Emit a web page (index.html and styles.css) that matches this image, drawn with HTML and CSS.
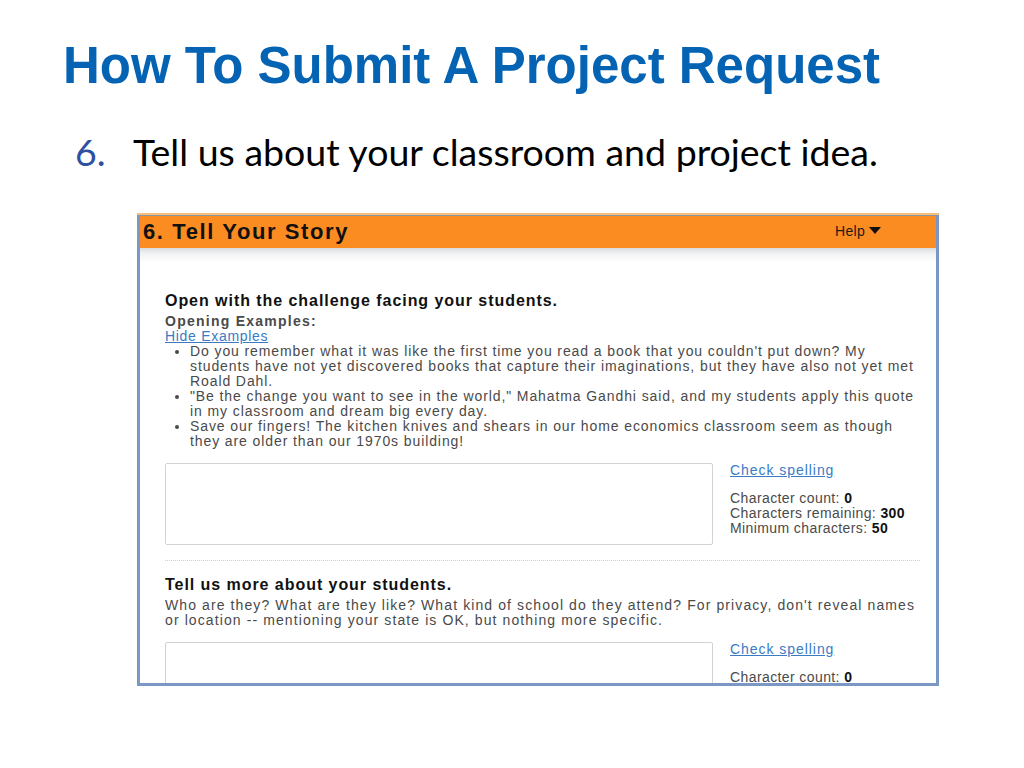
FILE: index.html
```html
<!DOCTYPE html>
<html lang="en">
<head>
<meta charset="utf-8">
<title>How To Submit A Project Request</title>
<link rel="stylesheet" href="styles.css">
</head>
<body>
<main class="slide">
  <h1 class="title">How To Submit A Project Request</h1>
  <p class="step"><span class="step-num">6.</span><span class="step-text">Tell us about your classroom and project idea.</span></p>

  <div class="shot">
    <div class="shot-head">
      <span class="shot-title">6. Tell Your Story</span>
      <span class="help">Help <svg class="caret" width="12" height="7" viewBox="0 0 12 7"><path d="M0 0H12L6 7Z" fill="#111"/></svg></span>
    </div>
    <div class="shot-body">
      <section class="q">
        <h2 class="q-title">Open with the challenge facing your students.</h2>
        <div class="q-sub">Opening Examples:</div>
        <a class="link">Hide Examples</a>
        <ul class="examples">
          <li>Do you remember what it was like the first time you read a book that you couldn't put down? My students have not yet discovered books that capture their imaginations, but they have also not yet met Roald Dahl.</li>
          <li>"Be the change you want to see in the world," Mahatma Gandhi said, and my students apply this quote in my classroom and dream big every day.</li>
          <li>Save our fingers! The kitchen knives and shears in our home economics classroom seem as though they are older than our 1970s building!</li>
        </ul>
        <div class="answer">
          <div class="box"></div>
          <div class="meta">
            <a class="link spell">Check spelling</a>
            <div class="counts">
              <div>Character count: <b>0</b></div>
              <div>Characters remaining: <b>300</b></div>
              <div>Minimum characters: <b>50</b></div>
            </div>
          </div>
        </div>
      </section>
      <hr class="sep">
      <section class="q">
        <h2 class="q-title">Tell us more about your students.</h2>
        <p class="q-desc">Who are they? What are they like? What kind of school do they attend? For privacy, don't reveal names or location -- mentioning your state is OK, but nothing more specific.</p>
        <div class="answer">
          <div class="box"></div>
          <div class="meta">
            <a class="link spell">Check spelling</a>
            <div class="counts">
              <div>Character count: <b>0</b></div>
            </div>
          </div>
        </div>
      </section>
    </div>
  </div>
</main>
</body>
</html>
```

FILE: styles.css
```css
* { box-sizing: border-box; }
html, body { margin: 0; padding: 0; background: #fff; }
body { width: 1024px; height: 768px; overflow: hidden; }

.slide {
  padding: 36px 0 0 63px;
}

.title {
  margin: 0;
  font-family: "Liberation Sans", Arial, sans-serif;
  font-weight: bold;
  font-size: 51px;
  line-height: 60px;
  color: #0563b3;
}

.step {
  margin: 34px 0 0 12px;
  display: flex;
  font-family: Lato, "Open Sans", sans-serif;
  font-size: 37.5px;
  line-height: 44px;
  color: #000;
}
.step-num { width: 58px; color: #2f4f9f; }

.shot {
  margin: 41px 0 0 74px;
  width: 802px;
  height: 471px;
  border: 3px solid #7b97c3;
  border-top: 1px solid #8d94a3;
  box-shadow: 0 -2px 0 #f5c07c;
  display: flex;
  flex-direction: column;
  overflow: hidden;
  font-family: "Liberation Sans", Arial, sans-serif;
}

.shot-head {
  flex: none;
  height: 32px;
  background: #fb8c22;
  display: flex;
  align-items: center;
  justify-content: space-between;
  padding: 0 52px 0 3px;
}
.shot-title {
  font-weight: bold;
  font-size: 22px;
  letter-spacing: 1.6px;
  color: #111;
}
.help {
  font-size: 14px;
  letter-spacing: 0.3px;
  color: #1a1a1a;
  display: flex;
  align-items: center;
  gap: 4px;
  margin: -3px 3px 0 0;
}
.caret { display: block; }

.shot-body {
  flex: 1;
  background: linear-gradient(#d9dcdf 0, #f2f3f4 6px, #fff 14px) no-repeat;
  padding: 43px 12px 0 25px;
  color: #4a4a4a;
  font-size: 14px;
  letter-spacing: 0.9px;
  line-height: 15px;
}

.q-title {
  margin: 0 0 3px;
  font-size: 16px;
  letter-spacing: 0.95px;
  line-height: 20px;
  font-weight: bold;
  color: #111;
}
.q-sub { font-weight: bold; color: #4a4a4a; letter-spacing: 1.25px; }
.link {
  display: block;
  color: #3a7bc4;
  text-decoration: underline;
  width: max-content;
  letter-spacing: 0.7px;
}
.link.spell { letter-spacing: 0.95px; }

.examples {
  margin: 0;
  padding: 0 0 0 25px;
}

.answer {
  margin-top: 14px;
  display: flex;
  gap: 17px;
}
.box {
  width: 548px;
  height: 82px;
  border: 1px solid #d2d2d2;
  border-radius: 2px;
  flex: none;
}
.meta { letter-spacing: 0.4px; }
.counts { margin-top: 13px; }
.counts b { color: #111; }

.sep {
  margin: 15px 4px 0 0;
  border: 0;
  border-top: 1px dotted #cfcfcf;
  height: 0;
}

.q + .sep + .q { margin-top: 14px; }
.q-desc { margin: 2px 0 0; letter-spacing: 1.1px; }
.q-desc + .answer { margin-top: 14px; }
```
